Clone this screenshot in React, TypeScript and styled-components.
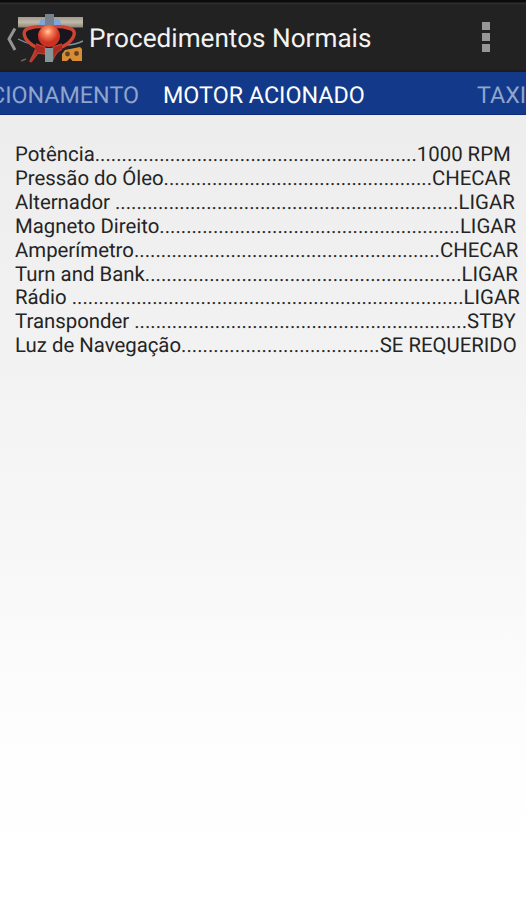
import React from "react";
import styled, { createGlobalStyle } from "styled-components";

const GlobalStyle = createGlobalStyle`
  html, body { margin: 0; padding: 0; overflow: hidden; }
  body { font-family: Roboto, "Noto Sans", sans-serif; text-rendering: geometricPrecision; }
`;

const Screen = styled.div`
  display: flex;
  flex-direction: column;
  width: 526px;
  height: 900px;
  overflow: hidden;
  background: linear-gradient(#ededed 115px, #f2f2f2 350px, #f7f7f7 540px, #fdfdfd 720px, #fff 860px);
`;

const ActionBar = styled.header`
  display: flex;
  align-items: center;
  box-sizing: border-box;
  flex: none;
  height: 72px;
  padding: 5px 36px 0 5px;
  background: linear-gradient(#0b0b0b 2px, #303030 3px, #222 5px, #222 69px, #1a1a1a 72px);
`;

const UpButton = styled.button`
  display: flex;
  flex: none;
  padding: 0;
  border: 0;
  background: none;
`;

const Title = styled.h1`
  flex: 1;
  margin: 0 0 0 6px;
  padding-top: 1px;
  color: #f3f3f3;
  font-size: 26.15px;
  font-weight: 400;
  line-height: 32px;
  white-space: nowrap;
`;

const OverflowButton = styled.button`
  display: grid;
  gap: 3px;
  padding: 0 0 3px;
  border: 0;
  background: none;
`;

const Dot = styled.i`
  width: 8px;
  height: 8px;
  background: #969696;
`;

const TabStrip = styled.nav`
  display: flex;
  align-items: center;
  box-sizing: border-box;
  flex: none;
  height: 43px;
  padding-top: 3px;
  background: #133a8a;
  border-bottom: 1px solid #0d2c76;
`;

const Tab = styled.span<{ $active?: boolean }>`
  flex: none;
  color: ${(p) => (p.$active ? "#fff" : "#91a4cc")};
  font-size: 23.3px;
  line-height: 28px;
  white-space: nowrap;
`;

const PreviousTab = styled(Tab)`
  display: flex;
  justify-content: flex-end;
  width: 139px;
`;

const CurrentTab = styled(Tab)`
  flex: 1;
  margin-left: 24px;
`;

const NextTab = styled(Tab)`
  width: 49px;
`;

const Checklist = styled.ul`
  margin: 0;
  padding: 28px 0 0 15px;
  list-style: none;
`;

const Item = styled.li`
  color: #242424;
  font-size: 20.36px;
  line-height: 23.9px;
  white-space: pre;
`;

const items: [string, number, string][] = [
  ["Potência", 60, "1000 RPM"],
  ["Pressão do Óleo", 50, "CHECAR"],
  ["Alternador ", 64, "LIGAR"],
  ["Magneto Direito", 56, "LIGAR"],
  ["Amperímetro", 57, "CHECAR"],
  ["Turn and Bank", 59, "LIGAR"],
  ["Rádio ", 73, "LIGAR"],
  ["Transponder ", 62, "STBY"],
  ["Luz de Navegação", 37, "SE REQUERIDO"],
];

const UpIcon = () => (
  <svg width="78" height="52" viewBox="5 12 78 52">
    <defs>
      <radialGradient id="spinner" cx=".45" cy=".3">
        <stop offset="0" stopColor="#ffd0a4" />
        <stop offset=".35" stopColor="#f98258" />
        <stop offset="1" stopColor="#cc3020" />
      </radialGradient>
      <linearGradient id="wing" x2="0" y2="1">
        <stop offset="0" stopColor="#a19a88" />
        <stop offset=".5" stopColor="#c0baad" />
        <stop offset="1" stopColor="#8d8574" />
      </linearGradient>
      <filter id="soft"><feGaussianBlur stdDeviation=".5" /></filter>
    </defs>
    <path d="M15 27.5 9 38l6 11" fill="none" stroke="#949494" strokeWidth="3" />
    <g filter="url(#soft)">
      <path d="M18 16h65v10.5H18z" fill="url(#wing)" />
      <path d="M38 26l3-8h18l4 8z" fill="#7ba6dc" />
      <path d="M25 29q24-8 49-1l1 7-12 11H36L24 36z" fill="#15151d" />
      <path d="M18 38q7 4 15 5M83 40q-8 4-17 4" fill="none" stroke="#78949e" strokeWidth="1.4" />
      <path d="M45 13h9v16h-9z" fill="#77818e" />
      <path d="M41 48Q31 45 26 38q-5-9 4-11 8-2 15-1M57 48q11-4 15-10 6-9-4-11-7-2-14-1" fill="none" stroke="#d04330" strokeWidth="3.4" strokeLinecap="round" />
      <path d="M36 43l9 3v7l-7-1-7 9M62 43l-9 3v13q2-7 9-11" fill="#a92b21" stroke="#c33b2a" strokeWidth="1.4" />
      <circle cx="49" cy="35" r="11" fill="url(#spinner)" />
      <path d="M45 47h8v14h-8z" fill="#839699" />
      <path d="M36 49l-6 12" stroke="#b34331" strokeWidth="2.2" />
      <path d="M21 60l5-2" stroke="#75614f" strokeWidth="1.5" />
      <path d="M65 49l15-3 2 2v12H72.500l-2.500-3-3 3h-5v-7z" fill="#d78d34" />
      <circle cx="67.500" cy="53" r="2.400" fill="#664020" />
      <circle cx="76.500" cy="52.500" r="2.400" fill="#664020" />
    </g>
  </svg>
);

export default function App() {
  return (
    <Screen>
      <GlobalStyle />
      <ActionBar>
        <UpButton aria-label="Voltar"><UpIcon /></UpButton>
        <Title>Procedimentos Normais</Title>
        <OverflowButton aria-label="Mais opções"><Dot /><Dot /><Dot /></OverflowButton>
      </ActionBar>
      <TabStrip>
        <PreviousTab>ACIONAMENTO</PreviousTab>
        <CurrentTab $active>MOTOR ACIONADO</CurrentTab>
        <NextTab>TAXI</NextTab>
      </TabStrip>
      <Checklist>
        {items.map(([name, dots, value]) => (
          <Item key={name}>{name + ".".repeat(dots) + value}</Item>
        ))}
      </Checklist>
    </Screen>
  );
}
